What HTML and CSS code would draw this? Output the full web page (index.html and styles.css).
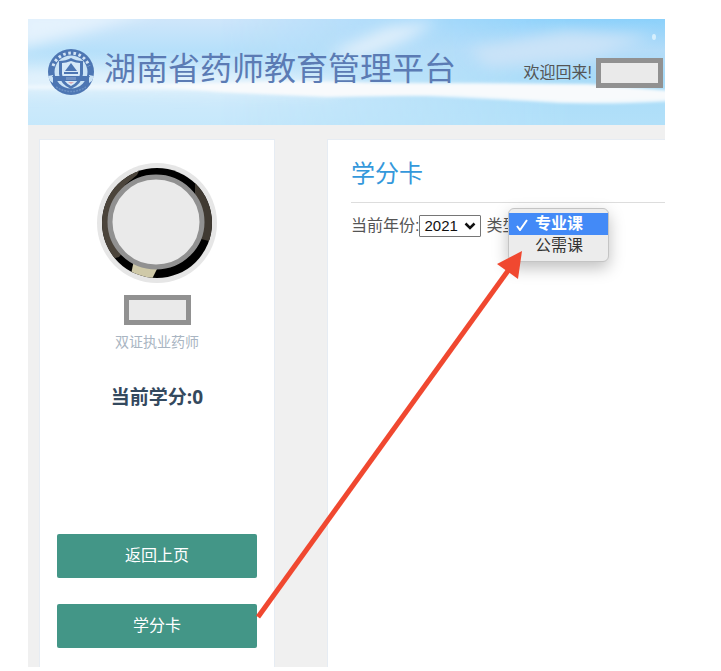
FILE: index.html
```html
<!DOCTYPE html>
<html lang="zh-CN">

<head>
    <meta charset="UTF-8">
    <title>湖南省药师教育管理平台</title>
    <link rel="stylesheet" href="styles.css">
</head>

<body>
    <div class="page">
        <header class="header">
            <svg class="sky" viewBox="0 0 637 106" preserveAspectRatio="none" aria-hidden="true">
                <defs>
                    <linearGradient id="skyLeft" x1="0" y1="0" x2="0" y2="1">
                        <stop offset="0" stop-color="#cfe6fa" />
                        <stop offset="0.3" stop-color="#b6e0fa" />
                        <stop offset="0.6" stop-color="#d2ebfb" />
                        <stop offset="1" stop-color="#c6e8fb" />
                    </linearGradient>
                    <linearGradient id="skyRight" x1="0" y1="0" x2="0" y2="1">
                        <stop offset="0" stop-color="#8cd1fb" />
                        <stop offset="0.3" stop-color="#b4dcf8" />
                        <stop offset="0.55" stop-color="#a8dbf8" />
                        <stop offset="1" stop-color="#b2e0f9" />
                    </linearGradient>
                    <linearGradient id="fade">
                        <stop offset="0.3" stop-color="#000" />
                        <stop offset="0.85" stop-color="#fff" />
                    </linearGradient>
                    <mask id="fadeMask"><rect width="637" height="106" fill="url(#fade)" /></mask>
                    <filter id="soft" x="-20%" y="-50%" width="140%" height="200%"><feGaussianBlur stdDeviation="7" /></filter>
                    <filter id="edge" x="-5%" y="-50%" width="110%" height="200%"><feGaussianBlur stdDeviation="1.5" /></filter>
                </defs>
                <rect width="637" height="106" fill="url(#skyLeft)" />
                <rect width="637" height="106" fill="url(#skyRight)" mask="url(#fadeMask)" />
                <g filter="url(#soft)">
                    <path d="M-10-10H130L60 12L-10 30Z" fill="#e4f2fd" />
                    <path d="M300 35L360 8L410 2L380 20L330 40Z" fill="#e0effb" />
                    <path d="M440 30L540 12L625 18L560 40L460 48Z" fill="#cae3f8" />
                    <path d="M-10 50L200 55L330 62L300 74L-10 72Z" fill="#e2f2fc" />
                </g>
                <g filter="url(#edge)">
                    <path d="M-5 66L90 65L180 64L310 64L450 64L560 65L645 72V82Q560 87 500 82L400 77L250 74L150 71L-5 70Z" fill="#eef7fd" />
                    <path d="M120 66L260 62L420 65L570 66L640 72V80L550 83L430 76L300 78L190 73Z" fill="#f8fafc" />
                </g>
                <ellipse cx="626" cy="18" rx="2" ry="3" fill="#d5effd" />
            </svg>
            <svg class="logo" viewBox="0 0 46 46" aria-hidden="true">
                <circle cx="23" cy="23" r="23" fill="#4d76b3" />
                <circle cx="23" cy="23" r="16.500" fill="#cbe3f6" />
                <path d="M5 17A19 19 0 0 1 41 17" fill="none" stroke="#d3e4f5" stroke-width="3" stroke-dasharray="2.600 2.600" />
                <path d="M0 27L5 26V34L2 32Z M46 27L41 26V34L44 32Z" fill="#cbe3f6" />
                <path d="M23 9Q28 12 35 12V25Q34 35 23 40Q12 35 11 25V12Q18 12 23 9Z" fill="#4d76b3" />
                <path d="M23 12Q28 14 32 14V25Q31 33 23 37Q15 33 14 25V14Q18 14 23 12Z" fill="#d7e9f8" />
                <path d="M23 14L29 22H17Z M16 23H30V25H16Z" fill="#4d76b3" />
                <path d="M4 27H42L39 32H7Z" fill="#4d76b3" />
                <path d="M18 28H28V31H18Z" fill="#7192c4" />
                <path d="M20 33H26L23 35Z" fill="#dda7b1" />
                <path d="M8 38Q23 47 38 38" fill="none" stroke="#6a90c4" stroke-width="1.500" stroke-dasharray="2 1" />
            </svg>
            <h1 class="site-name">湖南省药师教育管理平台</h1>
            <p class="welcome">欢迎回来!<span class="blank"></span></p>
        </header>

        <div class="content">
            <aside class="card sidebar">
                <svg class="avatar" viewBox="0 0 120 120" role="img" aria-label="头像">
                    <defs>
                        <clipPath id="photo"><circle cx="60" cy="60" r="55" /></clipPath>
                    </defs>
                    <circle cx="60" cy="60" r="60" fill="#e6e6e6" />
                    <g clip-path="url(#photo)">
                        <rect width="120" height="120" fill="#000" />
                        <path d="M0 0H46L40 12L28 22L50 60L22 94L0 100Z" fill="#4b443b" />
                        <path d="M98 18L120 20V80L104 76L98 60Z" fill="#403a32" />
                        <path d="M37 97L60 106L54 118L33 116Z" fill="#cfc9a8" />
                    </g>
                    <ellipse cx="59" cy="59" rx="46" ry="45" fill="#eaeaea" stroke="#919191" stroke-width="5" />
                </svg>
                <span class="blank"></span>
                <p class="role">双证执业药师</p>
                <p class="score">当前学分:0</p>
                <nav class="menu">
                    <button class="menu-btn" type="button">返回上页</button>
                    <button class="menu-btn" type="button">学分卡</button>
                </nav>
            </aside>

            <main class="card main">
                <h2 class="title">学分卡</h2>
                <form class="filter">
                    <label for="year">当前年份:</label>
                    <span class="year-box">
                        <select id="year" class="select">
                            <option>2021</option>
                        </select>
                        <svg class="chevron" viewBox="0 0 12 8" aria-hidden="true"><path d="M1.500 1.500L6 6L10.500 1.500" /></svg>
                    </span>
                    <label class="type-label" for="type">类型:</label>
                    <span class="type-box">
                        <select id="type" class="select">
                            <option>专业课</option>
                            <option>公需课</option>
                        </select>
                        <ul class="options" role="listbox" aria-label="类型">
                            <li class="option selected" role="option" aria-selected="true">
                                <svg class="check" viewBox="0 0 12 12" aria-hidden="true"><path d="M1 7L4 11L11 1" /></svg>专业课
                            </li>
                            <li class="option" role="option" aria-selected="false">公需课</li>
                        </ul>
                    </span>
                </form>
            </main>
        </div>

        <!-- 指引箭头 -->
        <svg class="arrow" viewBox="0 0 270 370" aria-hidden="true">
            <path d="M2 367L254 18" fill="none" stroke="#f04830" stroke-width="5" />
            <path d="M266 1L241 14L262 29Z" fill="#f04830" />
        </svg>
    </div>
</body>

</html>
```

FILE: styles.css
```css
* {
    box-sizing: border-box;
}

body {
    margin: 0;
    background: #fff;
    color: #555;
    font-family: "Liberation Sans", "Noto Sans CJK SC", sans-serif;
    font-size: 16px;
    line-height: 20px;
}

h1, h2, p, ul {
    margin: 0;
    padding: 0;
    font-weight: normal;
}

.page {
    position: relative;
    display: flex;
    flex-direction: column;
    min-height: 100vh;
    padding: 19px 56px 4px 28px;
}

.header {
    position: relative;
    display: flex;
    align-items: center;
    padding: 26px 2px 32px 20px;
}

.sky {
    position: absolute;
    top: 0;
    left: 0;
    width: 100%;
    height: 100%;
}

.logo {
    position: relative;
    width: 46px;
    height: 46px;
    margin-top: 4px;
    margin-right: 10px;
    margin-bottom: -2px;
}

.site-name {
    position: relative;
    color: #5b7bb4;
    font-size: 32px;
    line-height: 48px;
    white-space: nowrap;
}

.welcome {
    position: relative;
    display: flex;
    align-items: center;
    gap: 4px;
    margin-left: auto;
    padding-top: 8px;
    white-space: nowrap;
}

/* 隐藏的用户名 */
.blank {
    display: block;
    width: 67px;
    height: 30px;
    background: #eaeaea;
    border: 5px solid #919191;
}

.content {
    display: flex;
    flex: 1;
    gap: 52px;
    padding: 14px 0 0 11px;
    background: #f0f0f0;
}

.card {
    background: #fff;
    border: 1px solid #e6ecf3;
    border-bottom: 0;
}

.sidebar {
    display: flex;
    flex: none;
    flex-direction: column;
    align-items: center;
    width: 236px;
    padding: 23px 17px 19px;
}

.avatar {
    width: 120px;
    height: 120px;
    margin-bottom: 12px;
}

.role {
    margin-top: 7px;
    color: #a9b5c2;
    font-size: 14px;
}

.score {
    margin-top: 35px;
    color: #34495e;
    font-family: "Open Sans", "Noto Sans CJK SC", sans-serif;
    font-size: 19px;
    font-weight: bold;
}

.menu {
    display: flex;
    flex-direction: column;
    gap: 26px;
    width: 100%;
    margin-top: auto;
}

.menu-btn {
    height: 44px;
    padding: 0;
    background: #439687;
    border: 0;
    border-radius: 2px;
    color: #fff;
    font: inherit;
    cursor: pointer;
}

.main {
    flex: 1;
    min-width: 0;
    padding: 16px 0 0 23px;
    border-right: 0;
}

.title {
    padding-bottom: 10px;
    border-bottom: 1px solid #ddd;
    color: #3498db;
    font-size: 24px;
    line-height: 36px;
}

.filter {
    display: flex;
    align-items: center;
    padding-top: 12px;
    white-space: nowrap;
}

.year-box, .type-box {
    position: relative;
    display: flex;
}

.select {
    appearance: none;
    width: 62px;
    height: 22px;
    padding: 0 4px;
    background: #fff;
    border: 1px solid #767676;
    border-radius: 1px;
    color: #111;
    font: inherit;
    font-size: 15px;
}

.type-box .select {
    width: 76px;
}

.chevron {
    position: absolute;
    top: 7px;
    right: 5px;
    width: 12px;
    height: 8px;
    fill: none;
    stroke: #111;
    stroke-width: 2.5;
    pointer-events: none;
}

.type-label {
    margin-left: 5px;
}

.options {
    position: absolute;
    top: -7px;
    left: -15px;
    width: 101px;
    padding: 4px 0;
    background: #ececec;
    border: 1px solid #c4c4c4;
    border-radius: 6px;
    box-shadow: 0 6px 16px rgba(0, 0, 0, 0.25);
    color: #333;
    list-style: none;
}

.option {
    position: relative;
    padding-left: 26px;
    line-height: 22px;
}

.selected {
    background: #438af7;
    color: #fff;
    font-weight: bold;
}

.check {
    position: absolute;
    top: 6px;
    left: 7px;
    width: 12px;
    height: 12px;
    fill: none;
    stroke: #fff;
    stroke-width: 2;
}

.arrow {
    position: absolute;
    top: 250px;
    left: 256px;
    width: 270px;
    height: 370px;
    pointer-events: none;
}
```
